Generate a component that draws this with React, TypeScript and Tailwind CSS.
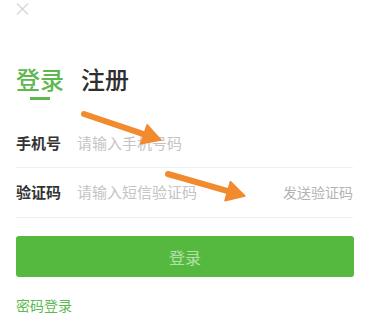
import React from "react";

const Arrow = ({ x1, y1, x2, y2 }: { x1: number; y1: number; x2: number; y2: number }) => {
  const a = Math.atan2(y2 - y1, x2 - x1);
  const len = 18;
  const w = 10;
  const bx = x2 - len * Math.cos(a);
  const by = y2 - len * Math.sin(a);
  const px = -Math.sin(a) * w;
  const py = Math.cos(a) * w;
  return (
    <g>
      <line x1={x1} y1={y1} x2={bx + 2 * Math.cos(a)} y2={by + 2 * Math.sin(a)} stroke="#f28a2e" strokeWidth={6} strokeLinecap="round" />
      <polygon
        points={`${x2},${y2} ${bx + px},${by + py} ${bx - px},${by - py}`}
        fill="#f28a2e"
        stroke="#f28a2e"
        strokeWidth={1.5}
        strokeLinejoin="round"
      />
    </g>
  );
};

export default function App() {
  return (
    <div
      className="relative w-[367px] h-[330px] bg-white overflow-hidden"
      style={{ fontFamily: '"Noto Sans CJK SC", "Noto Sans", sans-serif' }}
    >
      <div className="pl-4 pr-[14px]">
        <div className="pt-[3px] h-[14px]">
          <svg width="13" height="12" viewBox="0 0 13 12">
            <path d="M1 0.5 L12 11.5 M12 0.5 L1 11.5" stroke="#d6d6d6" strokeWidth="1.3" />
          </svg>
        </div>

        <div className="flex items-end gap-[17px] mt-[49px]">
          <span className="text-[24px] leading-[32px] font-medium text-[#5fb84f]">登录</span>
          <span className="text-[24px] leading-[32px] font-medium text-[#2f2f2f]">注册</span>
        </div>
        <div className="ml-[14px] mt-[2px] w-[20px] h-[3px] bg-[#5fb84f]" />

        <div className="mt-[18px] h-[50px] flex items-center border-b border-[#f0f0f0] pt-[2px]">
          <span className="w-[61px] text-[15px] font-bold text-[#333]">手机号</span>
          <span className="text-[15px] text-[#c4c4c4]">请输入手机号码</span>
        </div>
        <div className="h-[50px] flex items-center border-b border-[#f0f0f0]">
          <span className="w-[61px] text-[15px] font-bold text-[#333]">验证码</span>
          <span className="text-[15px] text-[#c4c4c4]">请输入短信验证码</span>
          <span className="ml-auto text-[14px] text-[#b3b3b3]">发送验证码</span>
        </div>

        <button className="mt-[18px] w-[338px] h-[41px] rounded-[3px] bg-[#55b93f] text-[16px] text-white/55">
          登录
        </button>

        <div className="mt-[18px] text-[14px] text-[#5cb852]">密码登录</div>
      </div>

      <svg className="absolute inset-0 pointer-events-none" width="367" height="330">
        <Arrow x1={84} y1={114} x2={161} y2={140} />
        <Arrow x1={168} y1={174} x2={245} y2={196} />
      </svg>
    </div>
  );
}
